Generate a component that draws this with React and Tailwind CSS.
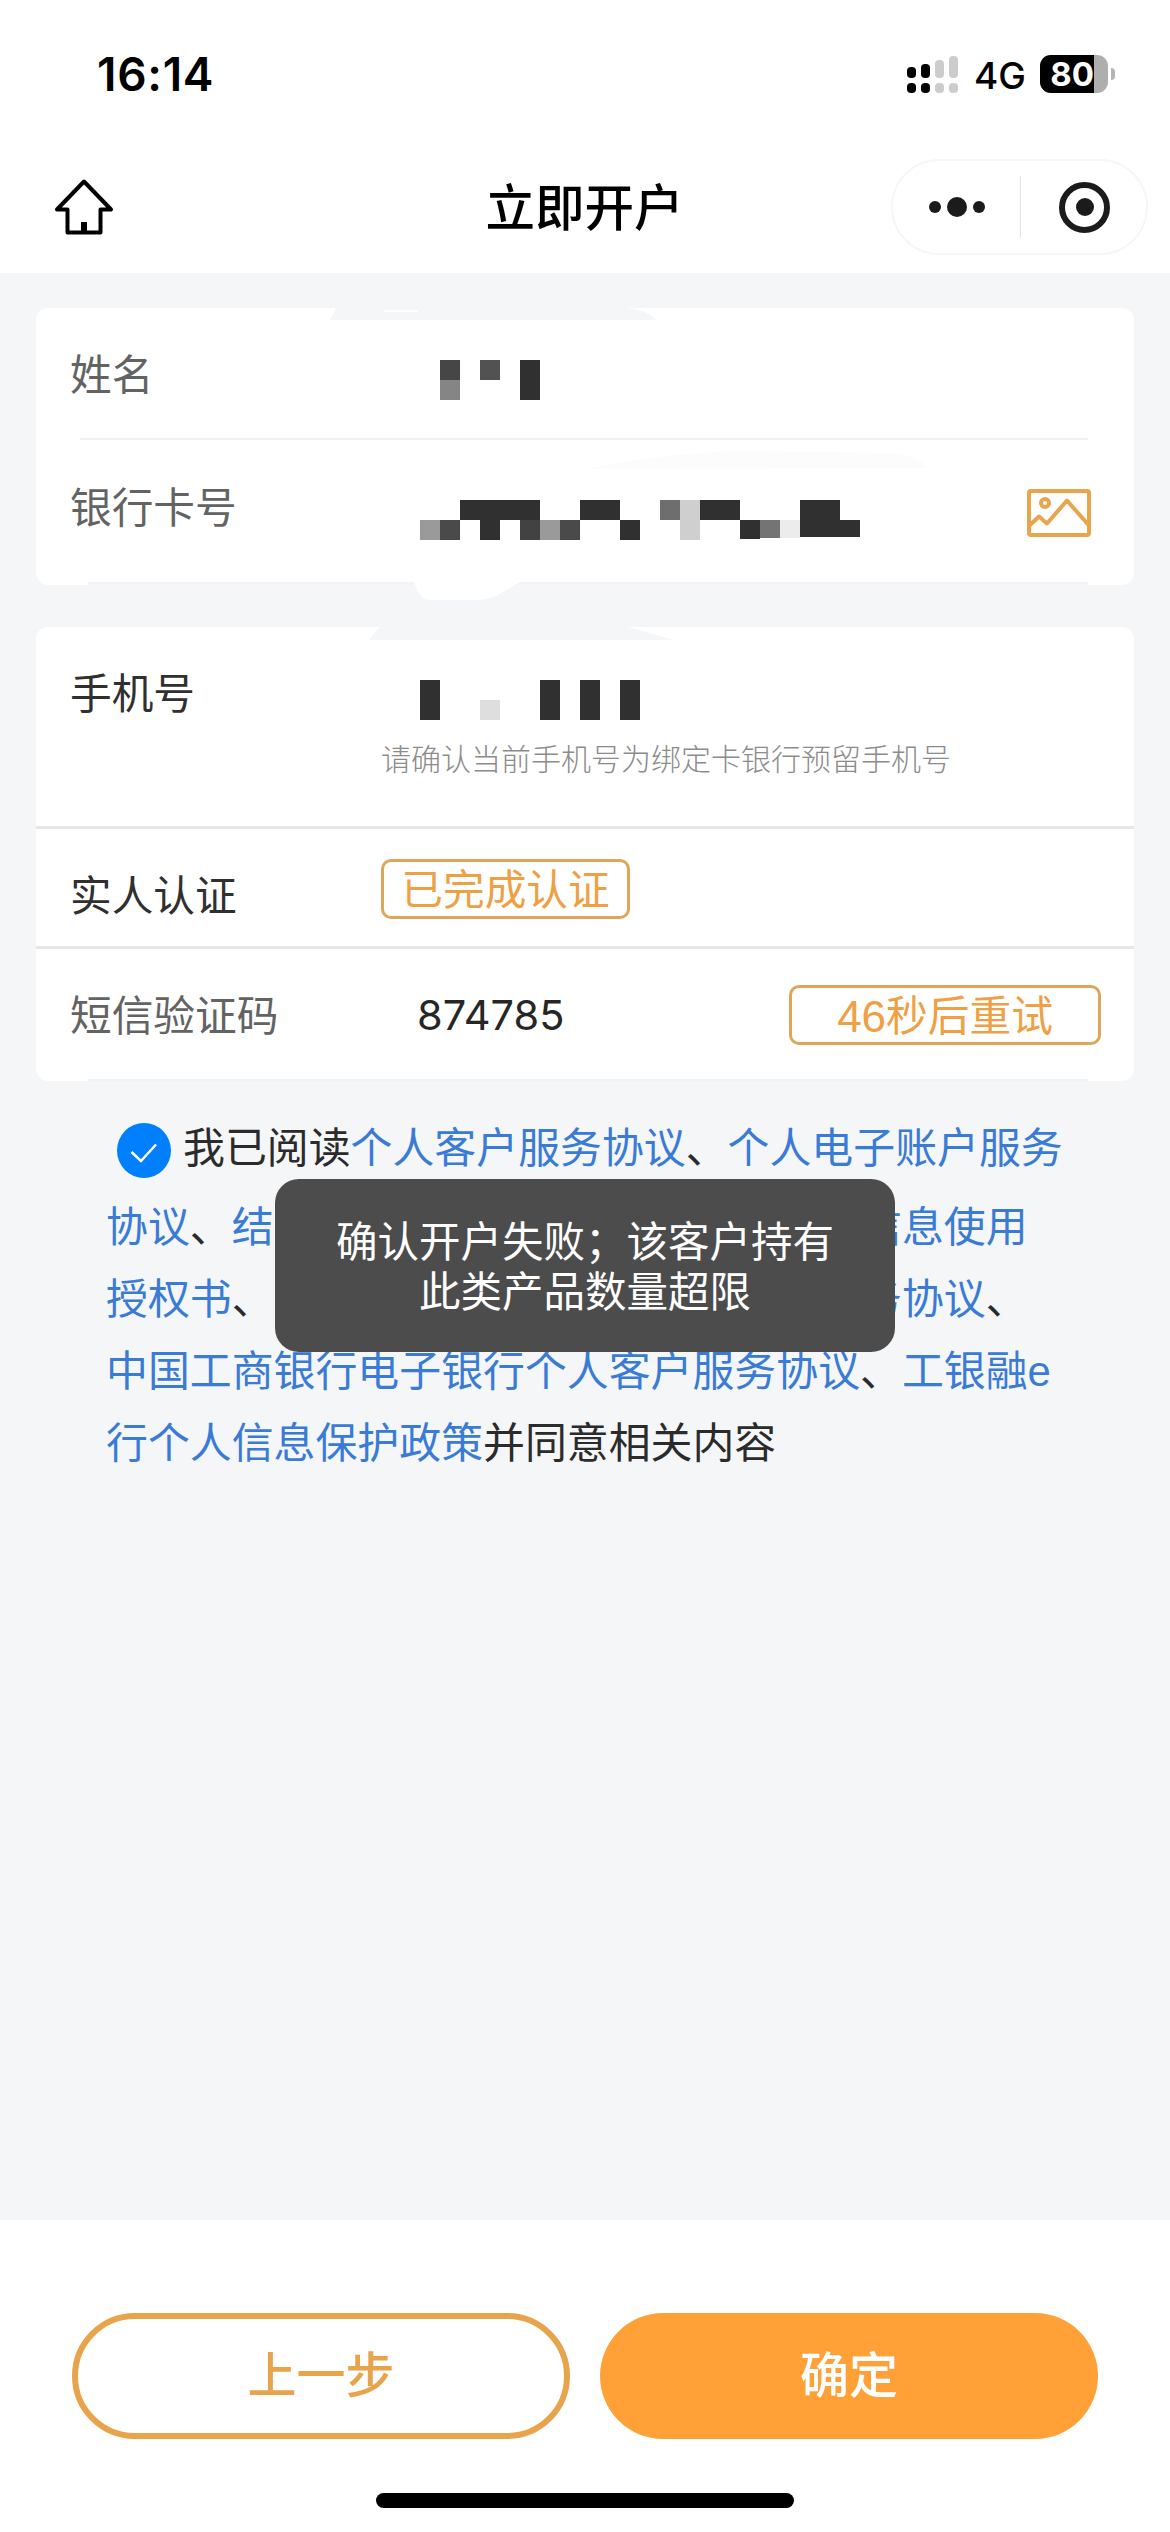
import React from 'react';

const DARK = '#303030';

// Mosaic cells: [column, row, columns wide, rows high, colour], 20px per cell
const nameCells = [
  [1, 0, 1, 1, '#464646'],
  [1, 1, 1, 1, '#858585'],
  [3, 0, 1, 1, '#525252'],
  [5, 0, 1, 2, DARK]
];

const cardCells = [
  [0, 1, 1, 1, '#9a9a9a'],
  [1, 1, 1, 1, '#4a4a4a'],
  [2, 0, 4, 1, DARK],
  [3, 1, 1, 1, DARK],
  [5, 1, 1, 1, '#424242'],
  [6, 1, 1, 1, '#9a9a9a'],
  [7, 1, 1, 1, '#4a4a4a'],
  [8, 0, 2, 1, DARK],
  [10, 1, 1, 1, DARK],
  [12, 0, 1, 1, '#6e6e6e'],
  [13, 0, 1, 2, '#cfcfcf'],
  [14, 0, 2, 1, DARK],
  [16, 1, 1, 0.95, DARK],
  [17, 1, 1, 0.92, '#747474'],
  [18, 1, 1, 0.9, '#ececec'],
  [19, 0, 2, 1, DARK],
  [19, 1, 3, 0.87, DARK]
];

const phoneCells = [
  [0, 0, 1, 2, DARK],
  [3, 1, 1, 1, '#dedede'],
  [6, 0, 1, 2, DARK],
  [8, 0, 1, 2, DARK],
  [10, 0, 1, 2, DARK]
];

const Mosaic = ({ cells }) => (
  <svg width="440" height="40" viewBox="0 0 22 2" shapeRendering="crispEdges">
    {cells.map(([x, y, w, h, fill]) => (
      <rect key={`${x}-${y}`} x={x} y={y} width={w} height={h} fill={fill} />
    ))}
  </svg>
);

const StatusBar = () => (
  <div className="flex h-[148px] items-center justify-between pl-[97px] pr-[55px] font-['Inter',sans-serif] text-black">
    <div className="text-[46px] font-semibold leading-none tracking-[0.7px]">16:14</div>
    <div className="flex items-center">
      <svg width="51" height="38" viewBox="0 0 51 38">
        <rect x="0" y="12" width="9" height="11" rx="4" fill="#000" />
        <rect x="14" y="9" width="9" height="14" rx="4" fill="#000" />
        <rect x="28" y="5" width="9" height="18" rx="4" fill="#ccc" />
        <rect x="42" y="1" width="9" height="22" rx="4" fill="#ccc" />
        <rect x="0" y="28" width="9" height="10" rx="4" fill="#000" />
        <rect x="14" y="28" width="9" height="10" rx="4" fill="#000" />
        <rect x="28" y="28" width="9" height="10" rx="4" fill="#ccc" />
        <rect x="42" y="28" width="9" height="10" rx="4" fill="#ccc" />
      </svg>
      <div className="ml-[16px] w-[51px] pt-[3px] text-[37px] font-medium leading-none">4G</div>
      <div className="ml-[15px] flex h-[38px] w-[68px] items-center overflow-hidden rounded-[11px] bg-[#aeaeae]">
        <div className="flex h-full w-[54px] items-center justify-end bg-black text-[33px] font-bold leading-none text-white">
          80
        </div>
      </div>
      <div className="ml-[3px] h-[12px] w-[4px] rounded-r-full bg-[#b5b5b5]" />
    </div>
  </div>
);

const NavBar = () => (
  <div className="flex h-[125px] items-start justify-between pl-[54px] pr-[22px]">
    <div className="flex w-[224px] pt-[30px]">
      <svg width="60" height="58" viewBox="0 0 60 58" fill="none" stroke="#000" strokeWidth="4" strokeLinejoin="round">
        <path d="M30 3.500 L57 31.500 H46.500 V54.500 H13.500 V31.500 H3 Z" />
        <path d="M30 44 V54" strokeWidth="6" />
      </svg>
    </div>
    <h1 className="pt-[21px] text-[49.500px] font-medium leading-[80px] text-black">立即开户</h1>
    <div className="mt-[11px] flex h-[96px] w-[257px] items-center rounded-full border-2 border-[#f6f6f6]">
      <div className="flex flex-1 items-center justify-center gap-[6px]">
        <span className="h-3 w-3 rounded-full bg-[#1b1b1b]" />
        <span className="h-5 w-5 rounded-full bg-[#1b1b1b]" />
        <span className="h-3 w-3 rounded-full bg-[#1b1b1b]" />
      </div>
      <div className="h-[62px] w-px bg-[#e2e2e2]" />
      <div className="flex w-[125px] items-center justify-center pl-[2px]">
        <div className="flex h-[51px] w-[51px] items-center justify-center rounded-full border-[6px] border-[#1b1b1b]">
          <span className="h-[18px] w-[18px] rounded-full bg-[#1b1b1b]" />
        </div>
      </div>
    </div>
  </div>
);

const ImageIcon = () => (
  <svg width="64" height="48" viewBox="0 0 64 48" fill="none" stroke="#e8a54c" strokeWidth="4" strokeLinejoin="round">
    <rect x="2" y="2" width="60" height="44" rx="2" />
    <circle cx="18" cy="14" r="4" />
    <path d="M2 37 L12 27.500 L20 34.500 L40 11.500 L62 36.500" />
  </svg>
);

const AccountCard = () => (
  <div className="relative h-[277px] rounded-[12px] bg-white">
    <div className="flex h-[130px] items-center pl-[34px]">
      <div className="w-[350px] pt-[6px] text-[#636363]">姓名</div>
      <div className="pt-[14px]">
        <Mosaic cells={nameCells} />
      </div>
    </div>
    <div className="ml-[44px] mr-[46px] h-[2px] bg-[#f1f1f1]" />
    <div className="flex h-[142px] items-center pl-[34px]">
      <div className="w-[350px] pb-[4px] text-[#636363]">银行卡号</div>
      <div className="pt-[18px]">
        <Mosaic cells={cardCells} />
      </div>
      <div className="ml-[167px] pt-[4px]">
        <ImageIcon />
      </div>
    </div>
    <div className="ml-[52px] mr-[46px] h-[3px] bg-[#f4f4f6]" />
    {/* soft edge smears around the card */}
    <svg className="absolute left-0 top-0" width="1098" height="294" viewBox="0 0 1098 294">
      <path d="M300 0 H590 Q612 2 620 12 H294 Z" fill="#f5f6f8" />
      <path d="M348 2 H382 V4 H348 Z" fill="#fff" />
      <path d="M378 274 H484 L460 288 Q450 292 440 292 H394 Q384 292 378 274 Z" fill="#fff" />
      <path d="M550 161 Q620 146 700 143 L860 145 Q885 150 892 160 Z" fill="#fcfcfd" />
    </svg>
  </div>
);

const VerifyCard = () => (
  <div className="relative mt-[42px] h-[454px] rounded-[12px] bg-white">
    <div className="flex h-[199px] pl-[34px]">
      <div className="w-[311px] pt-[38px] leading-[60px] text-[#303030]">手机号</div>
      <div>
        <div className="ml-[39px] mt-[53px]">
          <Mosaic cells={phoneCells} />
        </div>
        <div className="mt-[20px] text-[30px] leading-[40px] font-light text-[#8c8c8c]">
          请确认当前手机号为绑定卡银行预留手机号
        </div>
      </div>
    </div>
    <div className="h-[3px] bg-[#e7e7e7]" />
    <div className="flex h-[117px] pl-[34px]">
      <div className="w-[311px] pt-[38px] leading-[60px] text-[#303030]">实人认证</div>
      <div className="mt-[30px] flex h-[60px] w-[249px] items-center justify-center rounded-[10px] border-[3px] border-[#dfa558] pt-[4px] text-[#f0a044]">
        已完成认证
      </div>
    </div>
    <div className="h-[3px] bg-[#e7e7e7]" />
    <div className="flex h-[130px] pl-[34px]">
      <div className="w-[347px] pt-[38px] leading-[60px] text-[#636363]">短信验证码</div>
      <div className="w-[372px] pt-[36px] font-['Inter',sans-serif] text-[41.500px] leading-[60px] text-[#262626]">874785</div>
      <div className="mt-[36px] flex h-[60px] w-[312px] items-center justify-center rounded-[10px] border-[3px] border-[#dfa558] pt-[4px] text-[#f0a044]">
        <span className="text-[44px]">46</span>秒后重试
      </div>
    </div>
    <div className="ml-[52px] mr-[46px] h-[2px] bg-[#f2f3f5]" />
    <svg className="absolute left-[332px] top-0" width="320" height="13" viewBox="0 0 320 13">
      <path d="M12 0 H260 Q290 8 306 13 H0 Z" fill="#f5f6f8" />
    </svg>
  </div>
);

const Link = ({ children }) => <span className="text-[#3a7bd5]">{children}</span>;

const Agreement = () => (
  <div className="mt-[32px] pl-[70px] text-[41.900px] leading-[72px] whitespace-nowrap text-[#2b2b2b]">
    <div className="flex h-[79px] items-start">
      <svg className="ml-[11px] mr-[12px] mt-[10px]" width="54" height="55" viewBox="0 0 54 55">
        <ellipse cx="27" cy="27.500" rx="27" ry="27.500" fill="#0080ff" />
        <path d="M14.500 29 L24 38 L39 21.500" fill="none" stroke="#fff" strokeWidth="2.500" />
      </svg>
      <div>
        我已阅读<Link>个人客户服务协议</Link>、<Link>个人电子账户服务</Link>
      </div>
    </div>
    <div>
      <Link>协议</Link>、<Link>结算账户管理协议</Link>、<Link>工商银行个人信息使用</Link>
    </div>
    <div>
      <Link>授权书</Link>、<Link>中国工商银行个人人民币账户服务协议</Link>、
    </div>
    <div>
      <Link>中国工商银行电子银行个人客户服务协议</Link>、<Link>工银融e</Link>
    </div>
    <div>
      <Link>行个人信息保护政策</Link>并同意相关内容
    </div>
  </div>
);

const Toast = () => (
  <div className="absolute left-[275px] top-[1179px] flex h-[173px] w-[620px] flex-col items-center justify-center rounded-[24px] bg-[#4c4c4c] pt-[4px] text-[41.500px] leading-[50px] text-white">
    <div>确认开户失败；该客户持有</div>
    <div>此类产品数量超限</div>
  </div>
);

const Footer = () => (
  <div className="h-[312px] bg-white pt-[93px]">
    <div className="flex justify-between px-[72px] text-[49px] font-medium">
      <button className="h-[126px] w-[498px] rounded-full border-[6px] border-[#e8a44b] pt-[2px] text-[#e8a44b]">上一步</button>
      <button className="h-[126px] w-[498px] rounded-full bg-[#ffa136] pt-[2px] text-white">确定</button>
    </div>
    <div className="mx-auto mt-[54px] h-[15px] w-[418px] rounded-full bg-black" />
  </div>
);

export default function App() {
  return (
    <div className="relative flex h-[2532px] w-[1170px] flex-col overflow-hidden bg-white font-['Liberation_Sans','Noto_Sans_CJK_SC',sans-serif] text-[41.700px]">
      <StatusBar />
      <NavBar />
      <main className="flex-1 bg-[#f5f6f8] px-[36px] pt-[35px]">
        <AccountCard />
        <VerifyCard />
        <Agreement />
      </main>
      <Footer />
      <Toast />
    </div>
  );
}
